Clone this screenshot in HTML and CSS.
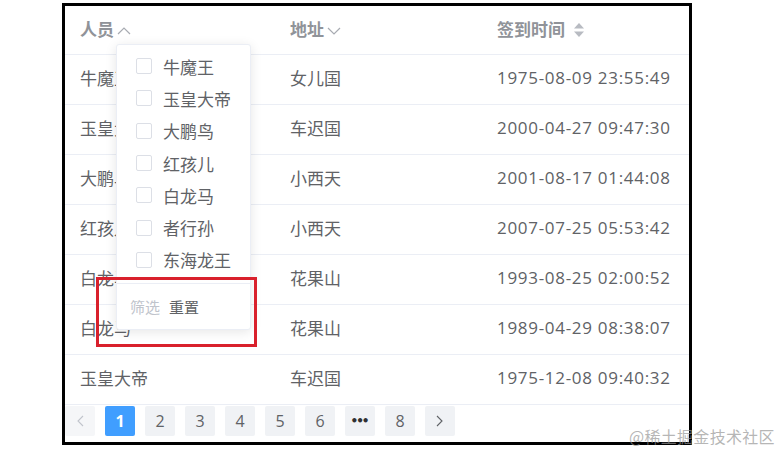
FILE: index.html
```html
<!DOCTYPE html>
<html lang="zh-CN">
<head>
    <meta charset="UTF-8">
    <title>签到表</title>
    <link rel="stylesheet" href="styles.css">
</head>
<body>
    <div class="frame">
        <table class="grid">
            <thead>
                <tr>
                    <th class="col-name">人员<svg class="chev" width="14" height="8" viewBox="0 0 14 8"><polyline points="1,7 7,1 13,7"/></svg></th>
                    <th class="col-addr">地址<svg class="chev" width="14" height="8" viewBox="0 0 14 8"><polyline points="1,1 7,7 13,1"/></svg></th>
                    <th>签到时间<svg class="caret" width="12" height="16" viewBox="0 0 12 16"><polygon points="6,1 11,6.5 1,6.5"/><polygon points="6,15 11,9.5 1,9.5"/></svg></th>
                </tr>
            </thead>
            <tbody>
                <tr><td>牛魔王</td><td>女儿国</td><td class="time">1975-08-09 23:55:49</td></tr>
                <tr><td>玉皇大帝</td><td>车迟国</td><td class="time">2000-04-27 09:47:30</td></tr>
                <tr><td>大鹏鸟</td><td>小西天</td><td class="time">2001-08-17 01:44:08</td></tr>
                <tr><td>红孩儿</td><td>小西天</td><td class="time">2007-07-25 05:53:42</td></tr>
                <tr><td>白龙马</td><td>花果山</td><td class="time">1993-08-25 02:00:52</td></tr>
                <tr><td>白龙马</td><td>花果山</td><td class="time">1989-04-29 08:38:07</td></tr>
                <tr><td>玉皇大帝</td><td>车迟国</td><td class="time">1975-12-08 09:40:32</td></tr>
            </tbody>
        </table>

        <div class="pager">
            <button class="pg disabled"><svg width="8" height="12" viewBox="0 0 8 12"><polyline points="7,1 2,6 7,11"/></svg></button>
            <button class="pg active">1</button>
            <button class="pg">2</button>
            <button class="pg">3</button>
            <button class="pg">4</button>
            <button class="pg">5</button>
            <button class="pg">6</button>
            <button class="pg more">•••</button>
            <button class="pg">8</button>
            <button class="pg"><svg width="8" height="12" viewBox="0 0 8 12"><polyline points="1,1 6,6 1,11"/></svg></button>
        </div>

        <div class="filter-pop">
            <ul class="filter-list">
                <li><span class="box"></span>牛魔王</li>
                <li><span class="box"></span>玉皇大帝</li>
                <li><span class="box"></span>大鹏鸟</li>
                <li><span class="box"></span>红孩儿</li>
                <li><span class="box"></span>白龙马</li>
                <li><span class="box"></span>者行孙</li>
                <li><span class="box"></span>东海龙王</li>
            </ul>
            <div class="filter-foot">
                <span class="btn-off">筛选</span>
                <span class="btn-reset">重置</span>
            </div>
        </div>

        <div class="mark-box"></div>
    </div>

    <div class="watermark">@稀土掘金技术社区</div>
</body>
</html>
```

FILE: styles.css
```css
body {
    margin: 0;
    background: #fff;
    font-family: "Open Sans", "Noto Sans CJK SC", sans-serif;
    color: #606266;
}
.frame {
    position: relative;
    width: 630px;
    height: 442px;
    margin: 3px 0 0 62px;
    border: 3px solid #000;
    box-sizing: border-box;
    background: #fff;
    overflow: hidden;
}
.grid {
    width: 100%;
    border-collapse: collapse;
    table-layout: fixed;
    font-size: 17px;
}
.grid th,
.grid td {
    text-align: left;
    padding: 0 15px 4px;
    border-bottom: 1px solid #ebeef5;
    white-space: nowrap;
    overflow: hidden;
}
.grid th {
    height: 44px;
    color: #909399;
    font-weight: bold;
}
.grid td {
    height: 45px;
    color: #606266;
}
.grid td.time {
    letter-spacing: 0.7px;
}
.col-name {
    width: 210px;
    box-sizing: border-box;
}
.col-addr {
    width: 207px;
    box-sizing: border-box;
}
.chev {
    margin-left: 3px;
    vertical-align: 1px;
}
.chev polyline {
    fill: none;
    stroke: #a8abb2;
    stroke-width: 1.2;
}
.caret {
    margin-left: 8px;
    vertical-align: -2px;
}
.caret polygon {
    fill: #b8bbc2;
}
.pager {
    display: flex;
    gap: 10px;
    padding-top: 1px;
}
.pg {
    width: 30px;
    height: 30px;
    padding: 0;
    border: none;
    border-radius: 2px;
    background: #f0f2f5;
    color: #606266;
    font-family: "Open Sans", sans-serif;
    font-size: 16px;
    display: flex;
    align-items: center;
    justify-content: center;
}
.pg svg polyline {
    fill: none;
    stroke: #606266;
    stroke-width: 1.1;
}
.pg.disabled {
    background: #f5f6f8;
}
.pg.disabled svg polyline {
    stroke: #c0c4cc;
}
.pg.active {
    background: #409eff;
    color: #fff;
    font-weight: bold;
}
.pg.more {
    font-family: "DejaVu Sans", sans-serif;
    font-size: 12px;
    font-weight: bold;
    letter-spacing: -2px;
    padding-right: 2px;
    color: #303133;
}
.filter-pop {
    position: absolute;
    left: 51px;
    top: 38px;
    width: 135px;
    background: #fff;
    border: 1px solid #ebeef5;
    border-radius: 3px;
    box-shadow: 0 2px 12px rgba(0, 0, 0, 0.1);
    box-sizing: border-box;
}
.filter-list {
    list-style: none;
    margin: 0;
    padding: 5px 0 7px 19px;
    border-bottom: 1px solid #ebeef5;
}
.filter-list li {
    display: flex;
    align-items: center;
    height: 32.3px;
    font-size: 17px;
    color: #606266;
}
.box {
    width: 14px;
    height: 14px;
    border: 1px solid #dcdfe6;
    border-radius: 2px;
    margin-right: 11px;
    flex-shrink: 0;
}
.filter-foot {
    height: 45px;
    display: flex;
    align-items: center;
    padding-left: 13px;
    gap: 9px;
    font-size: 15px;
    padding-bottom: 1px;
    box-sizing: border-box;
}
.btn-off {
    color: #c0c4cc;
}
.btn-reset {
    color: #606266;
}
.mark-box {
    position: absolute;
    left: 31px;
    top: 271px;
    width: 161px;
    height: 70px;
    border: 3px solid #d9202c;
    box-sizing: border-box;
}
.watermark {
    position: absolute;
    left: 629px;
    top: 424px;
    font-family: "Noto Sans CJK SC", sans-serif;
    font-size: 16px;
    color: rgba(150, 150, 150, 0.7);
    letter-spacing: 0.3px;
}
```
